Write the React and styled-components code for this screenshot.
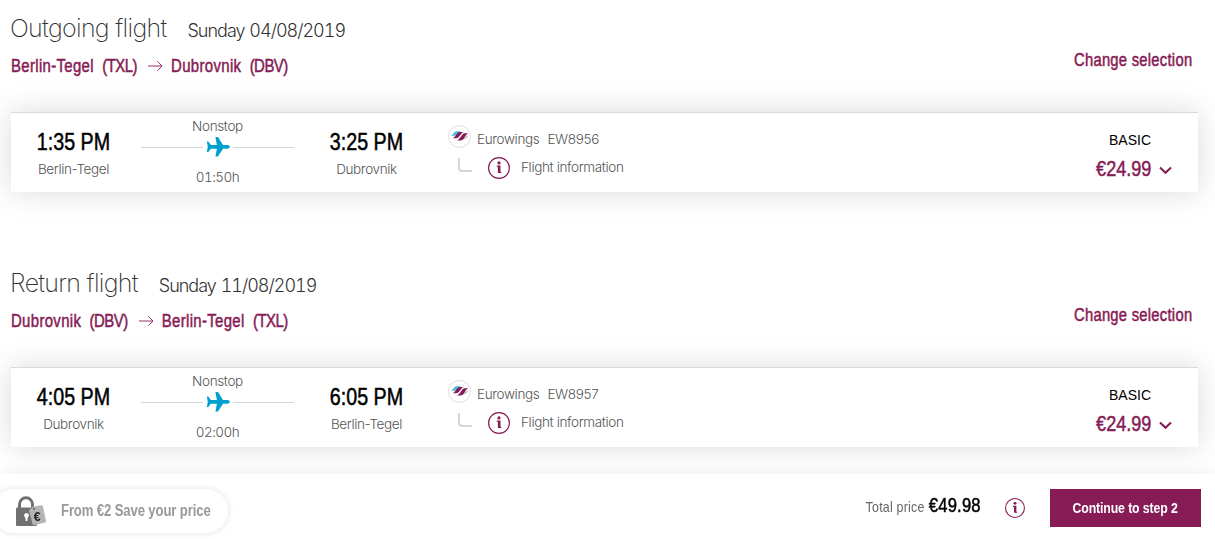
import React from 'react'
import styled, { createGlobalStyle } from 'styled-components'

const flights = [
    {
        title: 'Outgoing flight',
        date: 'Sunday 04/08/2019',
        from: 'Berlin-Tegel',
        fromCode: '(TXL)',
        to: 'Dubrovnik',
        toCode: '(DBV)',
        departure: '1:35 PM',
        arrival: '3:25 PM',
        duration: '01:50h',
        number: 'EW8956',
    },
    {
        title: 'Return flight',
        date: 'Sunday 11/08/2019',
        from: 'Dubrovnik',
        fromCode: '(DBV)',
        to: 'Berlin-Tegel',
        toCode: '(TXL)',
        departure: '4:05 PM',
        arrival: '6:05 PM',
        duration: '02:00h',
        number: 'EW8957',
    },
]

const Plane = () => (
    <svg width="24" height="22" viewBox="0 0 24 22">
        <path
            fill="#00a0cf"
            d="M.8 5.500h1.500l2.600 3.400h6L9.400 1H12l5 7.900h4.500c1.400 0 2.300 1 2.300 1.900s-.9 1.900-2.300 1.900H17L12 20.600H9.400l1.500-7.900h-6l-2.600 3.400H.8l1-5.300z"
        />
    </svg>
)

const AirlineLogo = () => (
    <svg width="23" height="23" viewBox="0 0 23 23">
        <circle cx="11.500" cy="11.500" r="11" fill="#fff" stroke="#ddd" />
        <path d="M2.800 10.800c2-.6 2.700-4.100 5.700-4.600h4.500c-2.700.9-4 4.600-7 4.600z" fill="#4dbbe0" />
        <path d="M14.500 14.200c2.300-.4 3-3 5.800-4-1 2.800-2.800 4.200-5.800 4z" fill="#b5b5b5" />
        <path
            d="M4.700 13.200c2.600-.6 3.600-5 6.600-6.100h4.200c-2.800 1.200-4 6.100-7.200 6.100zM9.200 15.400c2.800-.8 4-5.900 7-7.100h4c-3 1.400-3.800 7.100-7.300 7.100z"
            fill="#871b55"
        />
    </svg>
)

const Info = ({ size }) => (
    <svg width={size} height={size} viewBox="0 0 22 22">
        <circle cx="11" cy="11" r="10.400" fill="#fff" stroke="#871b55" strokeWidth="1.200" />
        <circle cx="11" cy="5.900" r="1.600" fill="#871b55" />
        <path d="M8.800 8.600h3.700v6.400h.8v1.100H9.900v-6.300H8.800z" fill="#871b55" />
    </svg>
)

const Arrow = () => (
    <svg width="18" height="12" viewBox="0 0 15 12" preserveAspectRatio="none">
        <path d="M0 6h14M9.500 1.300L14.200 6 9.500 10.700" fill="none" stroke="#871b55" strokeWidth=".9" />
    </svg>
)

const Chevron = () => (
    <svg width="13" height="9" viewBox="0 0 13 9">
        <path d="M1 1.500l5.500 5.300L12 1.500" fill="none" stroke="#871b55" strokeWidth="2" />
    </svg>
)

const Lock = () => (
    <svg width="31" height="31" viewBox="0 0 31 31">
        <path d="M3.500 13V8.300a6.500 6.500 0 0 1 13 0V13" fill="none" stroke="#6f7271" strokeWidth="3" />
        <rect x="0" y="11.500" width="21" height="18.500" rx="1" fill="#6f7271" />
        <path d="M10.500 17a2.400 2.400 0 0 1 1.200 4.500L11.300 25H9.700l-.4-3.500a2.400 2.400 0 0 1 1.200-4.500z" fill="#fff" />
        <path d="M13 14.500l4-4 8.500-1.200c1 0 1.300.4 1.500 1.200l3 14.500c0 .8-.3 1.200-1 1.400l-11 2.800c-.8.100-1.200-.2-1.400-1z" fill="#b4b5b4" />
        <circle cx="18" cy="12.800" r="1" fill="#555" />
        <text x="17.700" y="25.200" fontFamily="Liberation Sans, sans-serif" fontSize="12.500" fontWeight="700" fill="#222">€</text>
    </svg>
)

const App = () => {
    return (
        <Page>
            <GlobalStyle />
            {flights.map((flight) => (
                <Section key={flight.number}>
                    <Header>
                        <div>
                            <TitleRow>
                                <Title>{flight.title}</Title>
                                <FlightDate>{flight.date}</FlightDate>
                            </TitleRow>
                            <Route>
                                <span>{flight.from}</span>
                                <Code>{flight.fromCode}</Code>
                                <Arrow />
                                <span>{flight.to}</span>
                                <Code>{flight.toCode}</Code>
                            </Route>
                        </div>
                        <ChangeLink>Change selection</ChangeLink>
                    </Header>
                    <Card>
                        <Stop>
                            <Time>{flight.departure}</Time>
                            <Label>{flight.from}</Label>
                        </Stop>
                        <Leg>
                            <Label>Nonstop</Label>
                            <Track>
                                <Line />
                                <Plane />
                                <Line />
                            </Track>
                            <Duration>{flight.duration}</Duration>
                        </Leg>
                        <Stop>
                            <Time>{flight.arrival}</Time>
                            <Label>{flight.to}</Label>
                        </Stop>
                        <Carrier>
                            <CarrierRow>
                                <AirlineLogo />
                                <Label>Eurowings</Label>
                                <Label>{flight.number}</Label>
                            </CarrierRow>
                            <InfoRow>
                                <Elbow />
                                <Info size={22} />
                                <Label>Flight information</Label>
                            </InfoRow>
                        </Carrier>
                        <Fare>
                            <FareName>BASIC</FareName>
                            <PriceRow>
                                <Price>€24.99</Price>
                                <Chevron />
                            </PriceRow>
                        </Fare>
                    </Card>
                </Section>
            ))}
            <Footer>
                <SavePill>
                    <Lock />
                    <SaveText>From €2 Save your price</SaveText>
                </SavePill>
                <Total>
                    <TotalText>
                        <TotalLabel>Total price</TotalLabel>
                        <TotalPrice>€49.98</TotalPrice>
                    </TotalText>
                    <Info size={20} />
                    <Button>
                        <ButtonText>Continue to step 2</ButtonText>
                    </Button>
                </Total>
            </Footer>
        </Page>
    )
}

const GlobalStyle = createGlobalStyle`
    * {
        box-sizing: border-box;
    }
    body {
        margin: 0;
        background: #fff;
        overflow: hidden;
    }
    svg {
        display: block;
        flex-shrink: 0;
    }
`;
const Page = styled.div`
    font-family: Inter, "Liberation Sans", sans-serif;
    font-weight: 300;
    color: #333;
    white-space: nowrap;
`;
// condensed text: the regular face squeezed horizontally
const Condensed = styled.div`
    font-family: "Liberation Sans", Arial, sans-serif;
    font-weight: 400;
    transform: scaleX(${({ $scale }) => $scale || 0.82});
    transform-origin: ${({ $origin }) => $origin || 'left'} center;
`;
const Section = styled.section`
    height: 255px;
    padding: 13px 17px 0 11px;
`;
const Header = styled.div`
    display: flex;
    justify-content: space-between;
    padding-right: 6px;
`;
const TitleRow = styled.div`
    display: flex;
    align-items: baseline;
    gap: 21px;
`;
const Title = styled.h2`
    margin: 0 0 0 -1px;
    font-size: 25px;
    line-height: 30px;
    font-weight: 250;
    letter-spacing: -0.7px;
`;
const FlightDate = styled.span`
    font-size: 18px;
    line-height: 22px;
    font-weight: 280;
    letter-spacing: -1px;
    word-spacing: 1px;
    font-variant-numeric: tabular-nums;
`;
const Route = styled(Condensed).attrs({ $scale: 0.83 })`
    display: flex;
    align-items: center;
    margin-top: 12px;
    font-size: 18px;
    line-height: 22px;
    letter-spacing: 0.4px;
    color: #871b55;
    -webkit-text-stroke: 0.5px #871b55;
    svg {
        margin: 0 10px 0 13px;
    }
`;
const Code = styled.span`
    margin-left: 10px;
    letter-spacing: -0.6px;
`;
const ChangeLink = styled(Condensed).attrs({ as: 'a', $origin: 'right' })`
    align-self: flex-start;
    margin-top: 36px;
    font-size: 18px;
    line-height: 22px;
    letter-spacing: 0.33px;
    color: #871b55;
    -webkit-text-stroke: 0.5px #871b55;
    cursor: pointer;
`;
const Card = styled.div`
    display: flex;
    height: 80px;
    margin-top: 35px;
    padding: 0 26px 0 14px;
    background: #fff;
    border-top: 1px solid #dadada;
    box-shadow: 0 0 30px rgba(0, 0, 0, 0.15);
`;
const Stop = styled.div`
    width: 97px;
    padding-top: 14px;
    text-align: center;
`;
const Time = styled(Condensed).attrs({ $origin: 'center' })`
    margin-bottom: 2px;
    font-size: 24px;
    line-height: 30px;
    color: #000;
    -webkit-text-stroke: 0.5px #000;
`;
const Label = styled.div`
    font-size: 13.5px;
    line-height: 20px;
    letter-spacing: -0.35px;
    color: #555;
`;
const Duration = styled(Label)`
    letter-spacing: -0.5px;
    font-variant-numeric: tabular-nums;
`;
const Leg = styled.div`
    width: 153px;
    margin: 0 24px 0 19px;
    padding-top: 3px;
    text-align: center;
`;
const Track = styled.div`
    display: flex;
    align-items: center;
    gap: 3px;
    margin-bottom: 9px;
`;
const Line = styled.span`
    flex: 1;
    height: 1px;
    background: #d6d6d6;
`;
const Carrier = styled.div`
    margin-left: 33px;
    padding-top: 12px;
`;
const CarrierRow = styled.div`
    display: flex;
    height: 23px;
    gap: 6px;
    ${Label} {
        margin-top: 4px;
    }
    ${Label} + ${Label} {
        margin-left: 2px;
    }
`;
const InfoRow = styled.div`
    display: flex;
    margin-top: 9px;
    ${Label} {
        margin-left: 11px;
    }
`;
const Elbow = styled.span`
    width: 14px;
    height: 14px;
    margin: 1px 16px 0 10px;
    border: solid #d6d6d6;
    border-width: 0 0 2px 2px;
    border-bottom-left-radius: 4px;
`;
const Fare = styled.div`
    margin-left: auto;
    padding-top: 17px;
`;
const FareName = styled.div`
    margin: 0 21px 6px 0;
    font-family: "Liberation Sans", sans-serif;
    font-size: 14px;
    line-height: 20px;
    font-weight: 400;
    text-align: right;
    color: #000;
`;
const PriceRow = styled.div`
    display: flex;
    align-items: center;
    gap: 8px;
    svg {
        margin-top: 3px;
    }
`;
const Price = styled(Condensed).attrs({ $origin: 'right' })`
    font-size: 22px;
    line-height: 26px;
    color: #871b55;
    -webkit-text-stroke: 0.5px #871b55;
`;
const Footer = styled.footer`
    position: fixed;
    left: 0;
    right: 0;
    bottom: 0;
    display: flex;
    justify-content: space-between;
    height: 65px;
    padding: 15px 14px 0 0;
    background: #fff;
    box-shadow: 0 0 14px rgba(0, 0, 0, 0.08);
`;
const SavePill = styled.div`
    display: flex;
    align-items: center;
    gap: 14px;
    width: 236px;
    height: 44px;
    margin-left: -8px;
    padding-left: 24px;
    border-radius: 22px;
    box-shadow: 0 0 7px rgba(0, 0, 0, 0.12);
`;
const SaveText = styled(Condensed)`
    font-size: 16px;
    line-height: 20px;
    font-weight: 700;
    letter-spacing: -0.15px;
    color: #999;
`;
const Total = styled.div`
    display: flex;
    height: 38px;
    svg {
        align-self: center;
        margin: 0 25px 0 24px;
    }
`;
const TotalText = styled(Condensed).attrs({ $scale: 0.83, $origin: 'right' })`
    display: flex;
    align-items: baseline;
    gap: 5px;
    height: 32px;
    line-height: 32px;
`;
const TotalLabel = styled.span`
    font-size: 15px;
    letter-spacing: 0.25px;
    color: #666;
`;
const TotalPrice = styled.span`
    font-size: 20px;
    letter-spacing: 0.25px;
    color: #000;
    -webkit-text-stroke: 0.5px #000;
`;
const Button = styled.button`
    display: flex;
    align-items: center;
    justify-content: center;
    width: 151px;
    height: 38px;
    padding: 0 0 1px;
    border: 0;
    background: #871b55;
    color: #fff;
    cursor: pointer;
`;
const ButtonText = styled(Condensed).attrs({ as: 'span', $origin: 'center' })`
    font-size: 15px;
    line-height: 18px;
    font-weight: 700;
    letter-spacing: -0.15px;
`;

export default App
